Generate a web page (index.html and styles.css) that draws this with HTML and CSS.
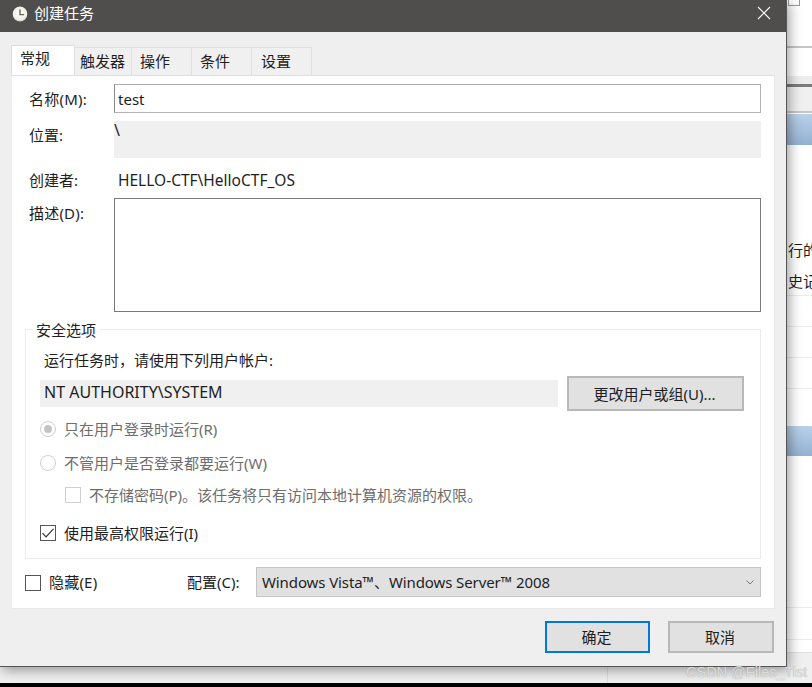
FILE: index.html
```html
<!DOCTYPE html>
<html lang="zh-CN">
<head>
<meta charset="utf-8">
<title>创建任务</title>
<link rel="stylesheet" href="styles.css">
</head>
<body>
<div class="screen">
  <div class="dialog">
    <header class="titlebar">
      <svg class="app-icon" width="16" height="16" viewBox="0 0 16 16"><defs><radialGradient id="cg" cx="50%" cy="45%" r="60%"><stop offset="0" stop-color="#ffffff"/><stop offset="0.75" stop-color="#eeeee6"/><stop offset="1" stop-color="#b4b4a6"/></radialGradient></defs><circle cx="8" cy="8" r="7.4" fill="url(#cg)"/><path d="M8 3.5V8.6H12" fill="none" stroke="#6a6450" stroke-width="1.4"/></svg>
      <span class="title">创建任务</span>
      <svg class="close" width="14" height="14" viewBox="0 0 14 14"><path d="M1 1L13 13M13 1L1 13" stroke="#fff" stroke-width="1.1" fill="none"/></svg>
    </header>
    <nav class="tabs">
      <span class="tab active">常规</span>
      <span class="tab t-trigger">触发器</span>
      <span class="tab">操作</span>
      <span class="tab">条件</span>
      <span class="tab t-last">设置</span>
    </nav>
    <main class="panel">
      <div class="form">
        <label class="lbl lbl-name">名称(M):</label>
        <div class="input">test</div>
        <label class="lbl lbl-loc">位置:</label>
        <div class="readonly">\</div>
        <label class="lbl lbl-author">创建者:</label>
        <div class="author">HELLO-CTF\HelloCTF_OS</div>
        <label class="lbl lbl-desc">描述(D):</label>
        <div class="textarea"></div>
      </div>
      <section class="group">
        <span class="legend">安全选项</span>
        <div class="run-as">运行任务时，请使用下列用户帐户:</div>
        <div class="account-row">
          <div class="account">NT AUTHORITY\SYSTEM</div>
          <button class="btn change">更改用户或组(U)...</button>
        </div>
        <div class="opt opt-a disabled"><span class="radio on"></span>只在用户登录时运行(R)</div>
        <div class="opt opt-b disabled"><span class="radio"></span>不管用户是否登录都要运行(W)</div>
        <div class="opt opt-c disabled"><span class="check off"></span>不存储密码(P)。该任务将只有访问本地计算机资源的权限。</div>
        <div class="opt opt-d"><span class="check"><svg width="14" height="14" viewBox="0 0 14 14"><path d="M1.5 7.2L5 10.8L12.5 2.8" fill="none" stroke="#333" stroke-width="1.2"/></svg></span>使用最高权限运行(I)</div>
      </section>
      <div class="footer-row">
        <span class="check hidden-check"></span>
        <span class="hidden-text">隐藏(E)</span>
        <span class="cfg-label">配置(C):</span>
        <div class="select">
          <span class="select-value">Windows Vista™、Windows Server™ 2008</span>
          <svg width="8" height="5" viewBox="0 0 8 5"><path d="M0.5 0.5L4 4L7.5 0.5" fill="none" stroke="#777" stroke-width="1"/></svg>
        </div>
      </div>
    </main>
    <div class="actions">
      <button class="btn ok">确定</button>
      <button class="btn cancel">取消</button>
    </div>
  </div>
  <aside class="strip">
    <div class="s-box"></div>
    <div class="s-rule"></div>
    <div class="s-pale"></div>
    <div class="s-dark"></div>
    <div class="s-head"></div>
    <div class="s-blue"></div>
    <div class="s-text s-text-a">行的</div>
    <div class="s-text s-text-b">史记</div>
    <div class="s-line s-l1"></div>
    <div class="s-line s-l2"></div>
    <div class="s-line s-l2"></div>
    <div class="s-line s-l2"></div>
    <div class="s-blue s-blue-b"></div>
    <div class="s-line s-l3"></div>
    <div class="s-line s-l4"></div>
    <div class="s-foot"></div>
  </aside>
  <div class="under"><div class="under-cell"></div></div>
  <div class="black"></div>
  <div class="watermark">CSDN @Files_Tist</div>
</div>
</body>
</html>
```
FILE: styles.css
```css
* { box-sizing: border-box; }
html, body { margin: 0; padding: 0; }
body { width: 812px; height: 687px; overflow: hidden; background: #000; font: 15px/20px "Noto Sans", "Noto Sans CJK SC", sans-serif; color: #1e1e1e; }
.screen { position: relative; display: grid; grid-template-columns: 787px 25px; grid-template-rows: 667px 16px 4px; width: 812px; height: 687px; }

.dialog { position: relative; z-index: 1; display: flex; flex-direction: column; background: #efefef; border-right: 1px solid #555; border-bottom: 1px solid #555; box-shadow: 2px 3px 12px rgba(0,0,0,.4); }
.titlebar { display: flex; align-items: flex-start; height: 32px; flex: none; background: #4f4e4c; color: #fff; padding: 0 14px 0 12px; }
.app-icon { margin-top: 6px; }
.title { margin-left: 6px; flex: 1; margin-top: 3px; }
.close { margin-top: 6px; margin-right: 1px; }

.tabs { display: flex; align-items: flex-end; height: 43px; flex: none; padding-left: 11px; position: relative; z-index: 1; }
.tab { width: 60px; height: 28px; background: #f0f0f0; border: 1px solid #dfdfdf; border-left: 0; border-bottom: 0; padding-left: 8px; line-height: 26px; }
.tab.t-trigger { width: 57px; padding-left: 5px; }
.tab.t-last { padding-left: 9px; }
.tab.active { width: 64px; height: 30px; background: #fff; border-left: 1px solid #dfdfdf; line-height: 24px; }

.panel { flex: none; width: 764px; height: 534px; margin: 0 11px; background: #fff; border: 1px solid #e8e8e8; border-top-color: #dfdfdf; border-left-color: #eee; padding: 8px 13px 0 13px; }
.form { display: grid; grid-template-columns: 85px 647px; grid-template-rows: 29px 45px 40px 114px; margin-left: 4px; }
.lbl { display: block; white-space: nowrap; }
.lbl-name { line-height: 31px; letter-spacing: .25px; }
.lbl-loc { line-height: 28px; margin-top: 8px; }
.lbl-author { line-height: 44px; }
.lbl-desc { line-height: 30px; letter-spacing: .2px; }
.input { border: 1px solid #b4b4b4; border-top-color: #adadad; border-left-color: #888; padding-left: 3px; line-height: 28px; }
.readonly { background: #f0f0f0; margin-top: 8px; font-size: 16px; line-height: 18px; }
.author { padding-left: 4px; line-height: 44px; white-space: nowrap; font-size: 15.5px; }
.textarea { border: 1px solid #7a7a7a; }

.group { position: relative; height: 230px; margin-top: 17px; width: 736px; border: 1px solid #ececec; padding: 20px 14px 0 14px; }
.legend { position: absolute; left: 7px; top: -10px; background: #fff; padding: 0 3px; }
.run-as { height: 20px; padding-left: 4px; }
.account-row { display: flex; align-items: center; height: 35px; margin-top: 6px; gap: 9px; }
.account { width: 518px; height: 27px; background: #f0f0f0; padding-left: 4px; line-height: 24px; font-size: 16px; }
.btn { font: inherit; color: inherit; background: #e1e1e1; border: 2px solid #b8b8b8; padding: 0 2px 0 0; }
.change { width: 177px; height: 35px; }
.opt { display: flex; align-items: center; height: 24px; white-space: nowrap; }
.opt.disabled { color: #6d6d6d; }
.opt-a { margin-top: 6px; }
.opt-b { margin-top: 10px; }
.opt-c { margin-top: 8px; padding-left: 25px; }
.opt-d { margin-top: 14px; }
.radio { width: 16px; height: 16px; border: 1px solid #cfcfcf; border-radius: 50%; margin-right: 8px; flex: none; display: flex; align-items: center; justify-content: center; }
.radio.on::after { content: ""; width: 8px; height: 8px; border-radius: 50%; background: #c4c4c4; }
.check { width: 16px; height: 16px; border: 1px solid #555; margin-right: 8px; flex: none; display: flex; align-items: center; justify-content: center; }
.check.off { border-color: #d0d0d0; }

.footer-row { display: flex; align-items: center; height: 30px; margin-top: 8px; }
.hidden-check { margin-top: 1px; }
.hidden-text { width: 138px; margin-top: -1px; letter-spacing: .2px; }
.cfg-label { width: 69px; }
.select { display: flex; align-items: center; justify-content: space-between; width: 505px; height: 30px; background: #e1e1e1; border: 1px solid #c4c4c4; padding: 0 6px 0 5px; }
.select-value { letter-spacing: -.1px; }

.actions { display: flex; justify-content: flex-end; gap: 18px; padding-right: 12px; margin-top: 12px; }
.ok { width: 105px; height: 32px; border-color: #0078d7; }
.cancel { width: 106px; height: 32px; }

.strip { grid-column: 2; grid-row: 1 / 3; display: flex; flex-direction: column; background: #fff; overflow: hidden; }
.s-box { flex: none; width: 12px; height: 6px; margin-left: 1px; border: 1px solid #999; border-top: 0; }
.s-rule { flex: none; height: 2px; margin-top: 40px; background: #c6c6c6; }
.s-pale { flex: none; height: 8px; margin-top: 28px; background: #ededed; }
.s-dark { flex: none; height: 3px; background: #7b7b7b; }
.s-head { flex: none; height: 26px; background: #f0f0f0; border-bottom: 2px solid #c6c6c6; margin-bottom: 1px; }
.s-blue { flex: none; height: 31px; background: linear-gradient(#b9d1e8, #94b1d2); }
.s-blue-b { height: 30px; margin-top: 37px; }
.s-text { flex: none; height: 20px; padding-left: 1px; white-space: nowrap; }
.s-text-a { margin-top: 95px; }
.s-text-b { margin-top: 11px; }
.s-line { flex: none; height: 1px; background: #ececec; }
.s-l1 { margin-top: 4px; }
.s-l2 { margin-top: 30px; }
.s-l3 { margin-top: 151px; }
.s-l4 { margin-top: 31px; }
.s-foot { flex: 1; margin-top: 12px; background: #f0f0f0; border-top: 1px solid #e0e0e0; }

.under { grid-column: 1; grid-row: 2; background: #f0f0f0; }
.under-cell { width: 608px; height: 16px; border-right: 1px solid #ddd; }
.black { grid-column: 1 / 3; grid-row: 3; background: #000; }
.watermark { position: absolute; z-index: 2; left: 686px; top: 662px; font: 14.5px/20px "Liberation Sans", sans-serif; color: rgba(255,255,255,.7); text-shadow: 0 0 1px #888; white-space: nowrap; }
```
